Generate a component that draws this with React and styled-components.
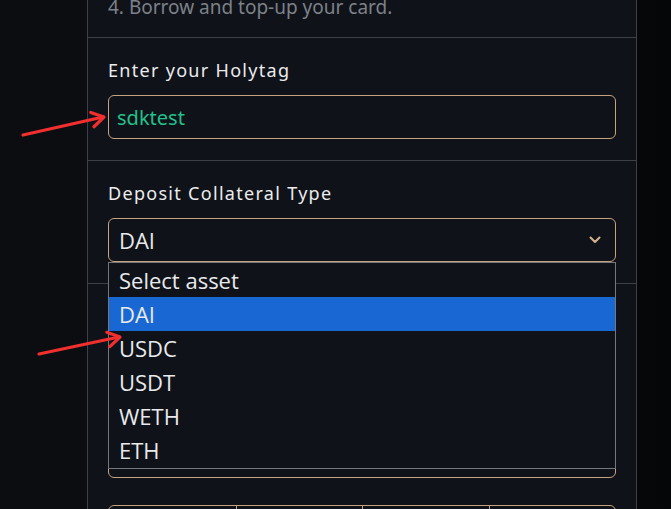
import React from "react";
import styled, { createGlobalStyle } from "styled-components";

const GlobalStyle = createGlobalStyle`
  html, body {
    margin: 0;
    padding: 0;
    height: 509px;
    overflow: hidden;
    background: linear-gradient(90deg, #0b0d11 0%, #0a0c10 60%, #050607 100%);
  }
  #root {
    height: 509px;
  }
`;

const Page = styled.div`
  position: relative;
  height: 509px;
  overflow: hidden;
  padding-left: 87px;
  font-family: "Noto Sans", "Open Sans", sans-serif;
`;

const Panel = styled.div`
  width: 548px;
  margin-top: -112px;
  background: #0f1218;
  border: 1px solid #3d4046;
  display: flex;
  flex-direction: column;
`;

const Section = styled.div`
  padding: 20px 20px ${(p) => p.$bottom || 21}px;
  border-bottom: 1px solid #3d4046;
  display: flex;
  flex-direction: column;
`;

const Step = styled.p`
  margin: 0;
  font-size: 19px;
  line-height: 28px;
  color: #7d8188;
`;

const Label = styled.label`
  font-size: 18px;
  font-weight: 400;
  line-height: 24px;
  color: #ebecee;
  margin-bottom: 13px;
  letter-spacing: 1.3px;
`;

const Input = styled.div`
  box-sizing: border-box;
  height: 44px;
  border: 1.5px solid #c6a27f;
  border-radius: 6px;
  display: flex;
  align-items: center;
  padding: 0 8px;
  font-size: 20px;
  color: ${(p) => p.$color || "#e8e9eb"};
`;

const Hidden = styled.div`
  height: 130px;
`;

const SelectWrap = styled.div`
  position: relative;
`;

const SelectBox = styled(Input)`
  justify-content: space-between;
  padding: 0 14px 0 10px;
  font-family: "Open Sans", sans-serif;
  font-size: 22px;
`;

const Menu = styled.ul`
  position: absolute;
  z-index: 5;
  top: 44px;
  left: 0;
  width: 508px;
  box-sizing: border-box;
  margin: 0;
  padding: 0 0 1px;
  list-style: none;
  background: #0f1218;
  border: 1px solid #74777c;
`;

const Option = styled.li`
  height: 34px;
  display: flex;
  align-items: center;
  padding: 0 10px;
  font-family: "Open Sans", sans-serif;
  font-size: 22px;
  color: #e8eaed;
  background: ${(p) => (p.$active ? "#1967d2" : "transparent")};
`;

const ButtonRow = styled.div`
  display: grid;
  grid-template-columns: repeat(4, 1fr);
  height: 40px;
  margin-top: 27px;
  border: 1.5px solid #c6a27f;
  border-radius: 6px;
  overflow: hidden;
`;

const RowButton = styled.div`
  border-left: ${(p) => (p.$first ? "none" : "1.5px solid #c6a27f")};
`;

const Arrow = styled.svg`
  position: absolute;
  z-index: 10;
  left: 0;
  top: 0;
  pointer-events: none;
`;

const Chevron = () => (
  <svg width="12" height="8" viewBox="0 0 12 8">
    <path d="M1.5 1.5 L6 6 L10.5 1.5" fill="none" stroke="#d6b28c" strokeWidth="2" strokeLinecap="round" strokeLinejoin="round" />
  </svg>
);

const RedArrow = ({ x1, y1, x2, y2 }) => {
  const a = Math.atan2(y2 - y1, x2 - x1);
  const len = 14;
  const spread = 0.55;
  const hx1 = x2 - len * Math.cos(a - spread);
  const hy1 = y2 - len * Math.sin(a - spread);
  const hx2 = x2 - len * Math.cos(a + spread);
  const hy2 = y2 - len * Math.sin(a + spread);
  return (
    <g stroke="#f22f2f" strokeWidth="3.2" strokeLinecap="round" strokeLinejoin="round" fill="none">
      <line x1={x1} y1={y1} x2={x2 - 1} y2={y2} />
      <polyline points={`${hx1},${hy1} ${x2},${y2} ${hx2},${hy2}`} />
    </g>
  );
};

const assets = ["Select asset", "DAI", "USDC", "USDT", "WETH", "ETH"];

export default function App() {
  return (
    <>
      <GlobalStyle />
      <Page>
        <Panel>
          <Section $bottom={16}>
            <Step>1. Connect your wallet.</Step>
            <Step>2. Choose a collateral asset.</Step>
            <Step>3. Deposit collateral.</Step>
            <Step>4. Borrow and top-up your card.</Step>
          </Section>

          <Section>
            <Label>Enter your Holytag</Label>
            <Input $color="#22c08b">sdktest</Input>
          </Section>

          <Section>
            <Label>Deposit Collateral Type</Label>
            <SelectWrap>
              <SelectBox>
                <span>DAI</span>
                <Chevron />
              </SelectBox>
              <Menu>
                {assets.map((a) => (
                  <Option key={a} $active={a === "DAI"}>
                    {a}
                  </Option>
                ))}
              </Menu>
            </SelectWrap>
          </Section>

          <Section>
            <Hidden />
            <Input />
            <ButtonRow>
              {[0, 1, 2, 3].map((i) => (
                <RowButton key={i} $first={i === 0} />
              ))}
            </ButtonRow>
          </Section>
        </Panel>

        <Arrow width="671" height="509" viewBox="0 0 671 509">
          <RedArrow x1={23} y1={135} x2={104} y2={117} />
          <RedArrow x1={39} y1={354} x2={120} y2={337} />
        </Arrow>
      </Page>
    </>
  );
}
